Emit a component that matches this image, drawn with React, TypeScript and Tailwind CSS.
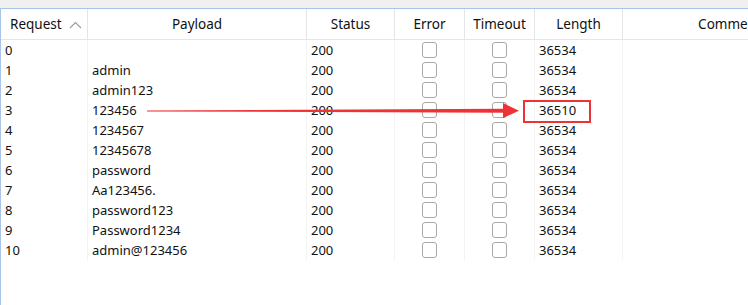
import React from "react";

const rows: [string, string][] = [
  ["0", ""],
  ["1", "admin"],
  ["2", "admin123"],
  ["3", "123456"],
  ["4", "1234567"],
  ["5", "12345678"],
  ["6", "password"],
  ["7", "Aa123456."],
  ["8", "password123"],
  ["9", "Password1234"],
  ["10", "admin@123456"],
];

function Box() {
  return <div className="w-[15px] h-[16px] rounded-[3px] border border-[#a9a9a9] bg-white" />;
}

export default function App() {
  return (
    <div
      className="relative w-[748px] h-[305px] overflow-hidden bg-white text-[#111]"
      style={{ fontFamily: '"Noto Sans", "Open Sans", sans-serif' }}
    >
      <div className="h-[8px] bg-[#f0f0f0]" />
      <div className="border-t border-l border-[#a8c4e8] h-[297px] w-[900px]">
        {/* header */}
        <div className="flex h-[31px] border-b border-[#e5e5e5] text-[13.5px]">
          <div className="w-[87px] shrink-0 border-r border-[#e5e5e5] flex items-center pl-[9px] relative">
            <span>Request</span>
            <svg className="absolute left-[68px] top-[12px]" width="13" height="8" viewBox="0 0 13 8">
              <path d="M1 7 L6.5 1.5 L12 7" fill="none" stroke="#9a9a9a" strokeWidth="1.1" />
            </svg>
          </div>
          <div className="w-[219px] shrink-0 border-r border-[#e5e5e5] flex items-center justify-center">Payload</div>
          <div className="w-[88px] shrink-0 border-r border-[#e5e5e5] flex items-center justify-center">Status</div>
          <div className="w-[70px] shrink-0 border-r border-[#e5e5e5] flex items-center justify-center">Error</div>
          <div className="w-[70px] shrink-0 border-r border-[#e5e5e5] flex items-center justify-center">Timeout</div>
          <div className="w-[88px] shrink-0 border-r border-[#e5e5e5] flex items-center justify-center">Length</div>
          <div className="w-[214px] shrink-0 border-r border-[#e5e5e5] flex items-center justify-center">Comment</div>
        </div>
        {/* body */}
        <div className="text-[13px]">
          {rows.map(([n, p]) => (
            <div key={n} className="flex h-[20px] leading-[21px]">
              <div className="w-[87px] shrink-0 border-r border-[#f3f3f3] pl-[4px]">{n}</div>
              <div className="w-[219px] shrink-0 border-r border-[#f3f3f3] pl-[4px]">{p}</div>
              <div className="w-[88px] shrink-0 border-r border-[#f3f3f3] pl-[4px]">200</div>
              <div className="w-[70px] shrink-0 border-r border-[#f3f3f3] flex items-center justify-center">
                <Box />
              </div>
              <div className="w-[70px] shrink-0 border-r border-[#f3f3f3] flex items-center justify-center">
                <Box />
              </div>
              <div className="w-[88px] shrink-0 border-r border-[#f3f3f3] pl-[4px]">{n === "3" ? "36510" : "36534"}</div>
              <div className="w-[214px] shrink-0 border-r border-[#f3f3f3]" />
            </div>
          ))}
        </div>
      </div>
      {/* annotation */}
      <div className="absolute left-[523px] top-[100px] w-[68px] h-[23px] border-[2.5px] border-[#ee3236]" />
      <svg className="absolute left-0 top-0 pointer-events-none" width="748" height="305">
        <polygon points="147,110.5 504,108.8 504,112.7 147,111.4" fill="#ee3236" />
        <polygon points="503,103 519,110.8 503,118" fill="#ee3236" />
      </svg>
    </div>
  );
}
